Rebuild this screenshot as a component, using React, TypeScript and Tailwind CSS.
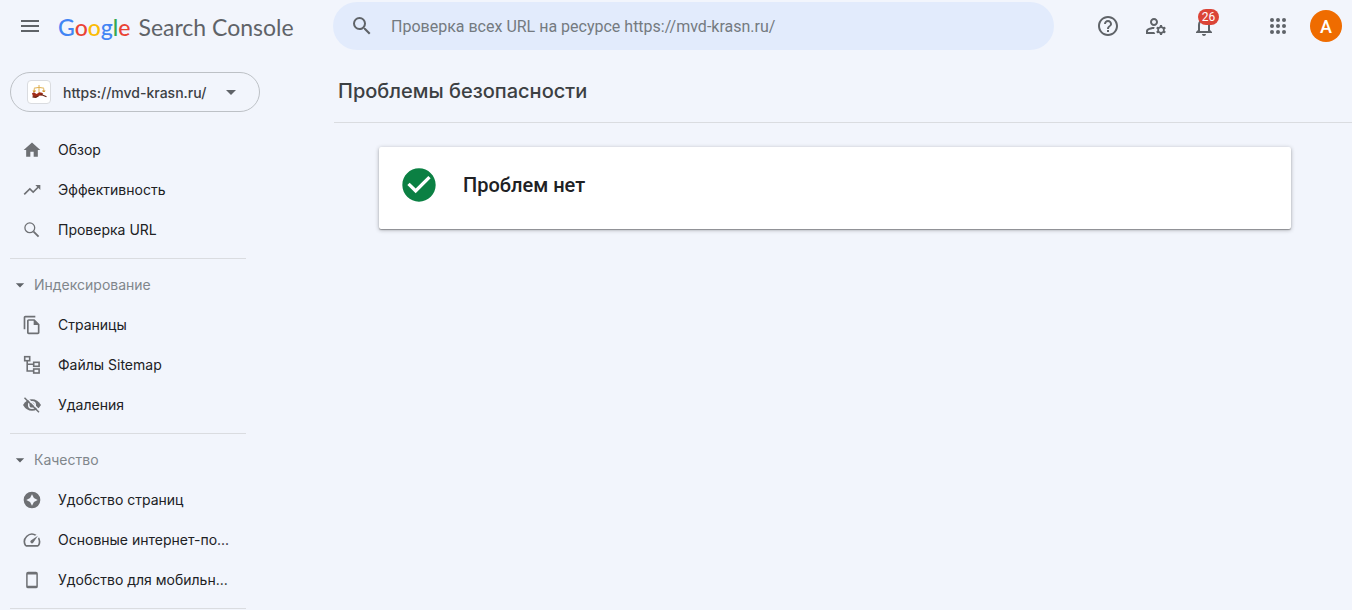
import React from 'react';
import {
  MdArrowDropDown,
  MdCheckCircle,
  MdHelpOutline,
  MdHome,
  MdMenu,
  MdNotificationsNone,
  MdOutlineFileCopy,
  MdOutlineManageAccounts,
  MdOutlineSpeed,
  MdSearch,
  MdTrendingUp,
} from 'react-icons/md';

interface NavItem {
  label: string;
  icon: React.ReactNode;
}

interface NavGroup {
  title?: string;
  items: NavItem[];
}

const ThinSearchIcon = () => (
  <svg width="20" height="20" viewBox="0 0 20 20" fill="none" stroke="currentColor">
    <circle cx="7.8" cy="7.8" r="4.9" strokeWidth="1.3" />
    <path d="M11.6 11.6l5 5" strokeWidth="1.8" />
  </svg>
);

const SitemapIcon = () => (
  <svg width="20" height="20" viewBox="0 0 20 20" fill="none" stroke="currentColor" strokeWidth="1.6">
    <rect x="2.7" y="1.7" width="5" height="4" />
    <rect x="11.7" y="7.3" width="5.4" height="4" />
    <rect x="11.7" y="14" width="5.4" height="4" />
    <path d="M5.2 5.7V16h6.5M5.2 9.3h6.5" />
  </svg>
);

const HiddenIcon = () => (
  <svg width="20" height="20" viewBox="0 0 20 20">
    <path d="M1 10q3.400-5.800 9-5.800t9 5.800q-3.400 5.800-9 5.800T1 10z" fill="currentColor" />
    <circle cx="10" cy="10" r="3.300" fill="none" stroke="#f2f5fc" strokeWidth="1.500" />
    <path d="M3.800 1.800l14 14" stroke="#f2f5fc" strokeWidth="1.600" />
    <path d="M2.500 2.800l14.500 14.500" stroke="currentColor" strokeWidth="1.500" />
  </svg>
);

const ExperienceIcon = () => (
  <svg width="20" height="20" viewBox="0 0 24 24" fill="currentColor">
    <path
      fillRule="evenodd"
      d="M12 2a10 10 0 1 0 0 20 10 10 0 0 0 0-20zm0 3.200l2.300 4.500 4.500 2.300-4.500 2.300-2.300 4.500-2.300-4.500L5.200 12l4.500-2.300z"
    />
  </svg>
);

const PhoneIcon = () => (
  <svg width="20" height="20" viewBox="0 0 20 20" fill="none" stroke="currentColor">
    <rect x="4.9" y="2.6" width="10.2" height="15" rx="1.2" strokeWidth="1.5" />
    <path d="M5 3.7h10M5 16.5h10" strokeWidth="1.6" />
  </svg>
);

const AppsIcon = () => (
  <svg width="24" height="24" viewBox="0 0 24 24" fill="currentColor">
    {[6, 12, 18].map((y) => [6, 12, 18].map((x) => <circle key={`${x}-${y}`} cx={x} cy={y} r="2" />))}
  </svg>
);

const ScalesIcon = () => (
  <svg width="18" height="18" viewBox="0 0 18 18">
    <g fill="none" stroke="#e0b050" strokeWidth="1">
      <path d="M9 2v8M4 5.2q5-1.600 10 0M4.2 5.5v2.5M13.8 5.5v2.5" />
    </g>
    <path d="M2.5 7.6h3.6l-1 1.3H3.4zM12 7.6h3.6l-1 1.3h-1.7z" fill="#cf9430" />
    <path d="M2 10.200l2-1 2.500 1.800 3-1.800 2.500.6 1.200 1-1.200 1.600-3 .4-2.600 1.600-3.400-.6z" fill="#a02c18" />
    <path d="M2.500 13.800l3 .6 3-1.400M10.500 11.200l6 2.600" fill="none" stroke="#6b2414" strokeWidth="1.2" />
  </svg>
);

const NAV: NavGroup[] = [
  {
    items: [
      { label: 'Обзор', icon: <MdHome size={20} /> },
      { label: 'Эффективность', icon: <MdTrendingUp size={20} /> },
      { label: 'Проверка URL', icon: <ThinSearchIcon /> },
    ],
  },
  {
    title: 'Индексирование',
    items: [
      { label: 'Страницы', icon: <MdOutlineFileCopy size={20} /> },
      { label: 'Файлы Sitemap', icon: <SitemapIcon /> },
      { label: 'Удаления', icon: <HiddenIcon /> },
    ],
  },
  {
    title: 'Качество',
    items: [
      { label: 'Удобство страниц', icon: <ExperienceIcon /> },
      { label: 'Основные интернет-по...', icon: <MdOutlineSpeed size={20} /> },
      { label: 'Удобство для мобильн...', icon: <PhoneIcon /> },
    ],
  },
];

const Logo = () => (
  <a href="#" className="flex items-baseline gap-2 pt-0.5 font-[Lato,sans-serif] text-[23px] whitespace-nowrap">
    <span className="font-medium">
      <span className="text-[#4285f4]">G</span>
      <span className="text-[#ea4335]">o</span>
      <span className="text-[#fbbc04]">o</span>
      <span className="text-[#4285f4]">g</span>
      <span className="text-[#34a853]">l</span>
      <span className="text-[#ea4335]">e</span>
    </span>
    <span className="text-[#5f6368]">Search Console</span>
  </a>
);

const Header = () => (
  <header className="flex h-13 items-center text-[#5f6368]">
    <div className="flex w-[333px] shrink-0 items-center gap-4 pl-[18px]">
      <button aria-label="Главное меню">
        <MdMenu size={24} />
      </button>
      <Logo />
    </div>
    <label className="flex h-12 flex-1 items-center gap-[17px] rounded-full bg-[#e2ebfc] pl-[17px]">
      <MdSearch size={24} className="shrink-0" />
      <input
        type="text"
        placeholder="Проверка всех URL на ресурсе https://mvd-krasn.ru/"
        className="w-full bg-transparent pt-0.5 font-[Roboto,sans-serif] text-base outline-none placeholder:text-[#747a80]"
      />
    </label>
    <div className="flex w-[298px] shrink-0 items-center justify-end gap-6 pr-[10px]">
      <button aria-label="Справка">
        <MdHelpOutline size={24} />
      </button>
      <button aria-label="Пользователи и разрешения">
        <MdOutlineManageAccounts size={24} />
      </button>
      <button aria-label="Уведомления" className="relative mr-[26px]">
        <MdNotificationsNone size={24} />
        <span className="absolute -top-[5px] left-[6px] flex h-4 w-[21px] items-center justify-center rounded-full bg-[#db4437] font-[Roboto,sans-serif] text-xs text-white">
          26
        </span>
      </button>
      <button aria-label="Приложения Google">
        <AppsIcon />
      </button>
      <button
        aria-label="Аккаунт"
        className="-ml-1 flex size-8 items-center justify-center rounded-full bg-[#ef6c00] pt-0.5 font-[Roboto,sans-serif] text-lg font-medium text-white"
      >
        А
      </button>
    </div>
  </header>
);

const Sidebar = () => (
  <aside className="w-[334px] shrink-0 pt-5 pl-[10px]">
    <button className="flex h-10 w-[250px] items-center rounded-full border border-[#bdc1c6] pl-4 text-sm font-medium text-[#3c4043]">
      <span className="flex size-6 items-center justify-center rounded-sm border border-[#dadce0] bg-white">
        <ScalesIcon />
      </span>
      <span className="ml-3 pt-0.5">https://mvd-krasn.ru/</span>
      <MdArrowDropDown size={24} className="mr-4 ml-auto text-[#5f6368]" />
    </button>
    <nav className="mt-[17px] w-[236px] text-sm">
      {NAV.map((group, i) => (
        <div key={i} className="mb-[5px] border-b border-[#dadce0] pb-[9px]">
          {group.title && (
            <button className="flex h-10 w-full items-center gap-1 pt-px text-[#80868b]">
              <MdArrowDropDown size={20} className="text-[#5f6368]" />
              {group.title}
            </button>
          )}
          {group.items.map((item) => (
            <a key={item.label} href="#" className="flex h-10 items-center gap-4 pt-px pl-3 text-[#202124]">
              <span className="shrink-0 text-[#6e7074]">{item.icon}</span>
              <span className="whitespace-nowrap">{item.label}</span>
            </a>
          ))}
        </div>
      ))}
    </nav>
  </aside>
);

export default function App() {
  return (
    <div className="min-h-screen overflow-hidden bg-[#f2f5fc] font-[Inter,sans-serif]">
      <Header />
      <div className="flex">
        <Sidebar />
        <main className="flex-1">
          <div className="flex h-[71px] items-center border-b border-[#dadce0] pt-2 pl-1">
            <h1 className="text-xl font-medium text-[#3c4043]">Проблемы безопасности</h1>
          </div>
          <section className="mt-6 mr-[61px] ml-[45px] flex h-[82px] items-center gap-6 rounded-xs bg-white pb-1.5 pl-5 shadow-[0_1px_4px_rgba(0,0,0,0.3),0_1px_1px_rgba(0,0,0,0.3)]">
            <MdCheckCircle size={40} className="text-[#0b8043]" />
            <h2 className="font-[Roboto,sans-serif] text-xl font-medium text-[#202124]">Проблем нет</h2>
          </section>
        </main>
      </div>
    </div>
  );
}
